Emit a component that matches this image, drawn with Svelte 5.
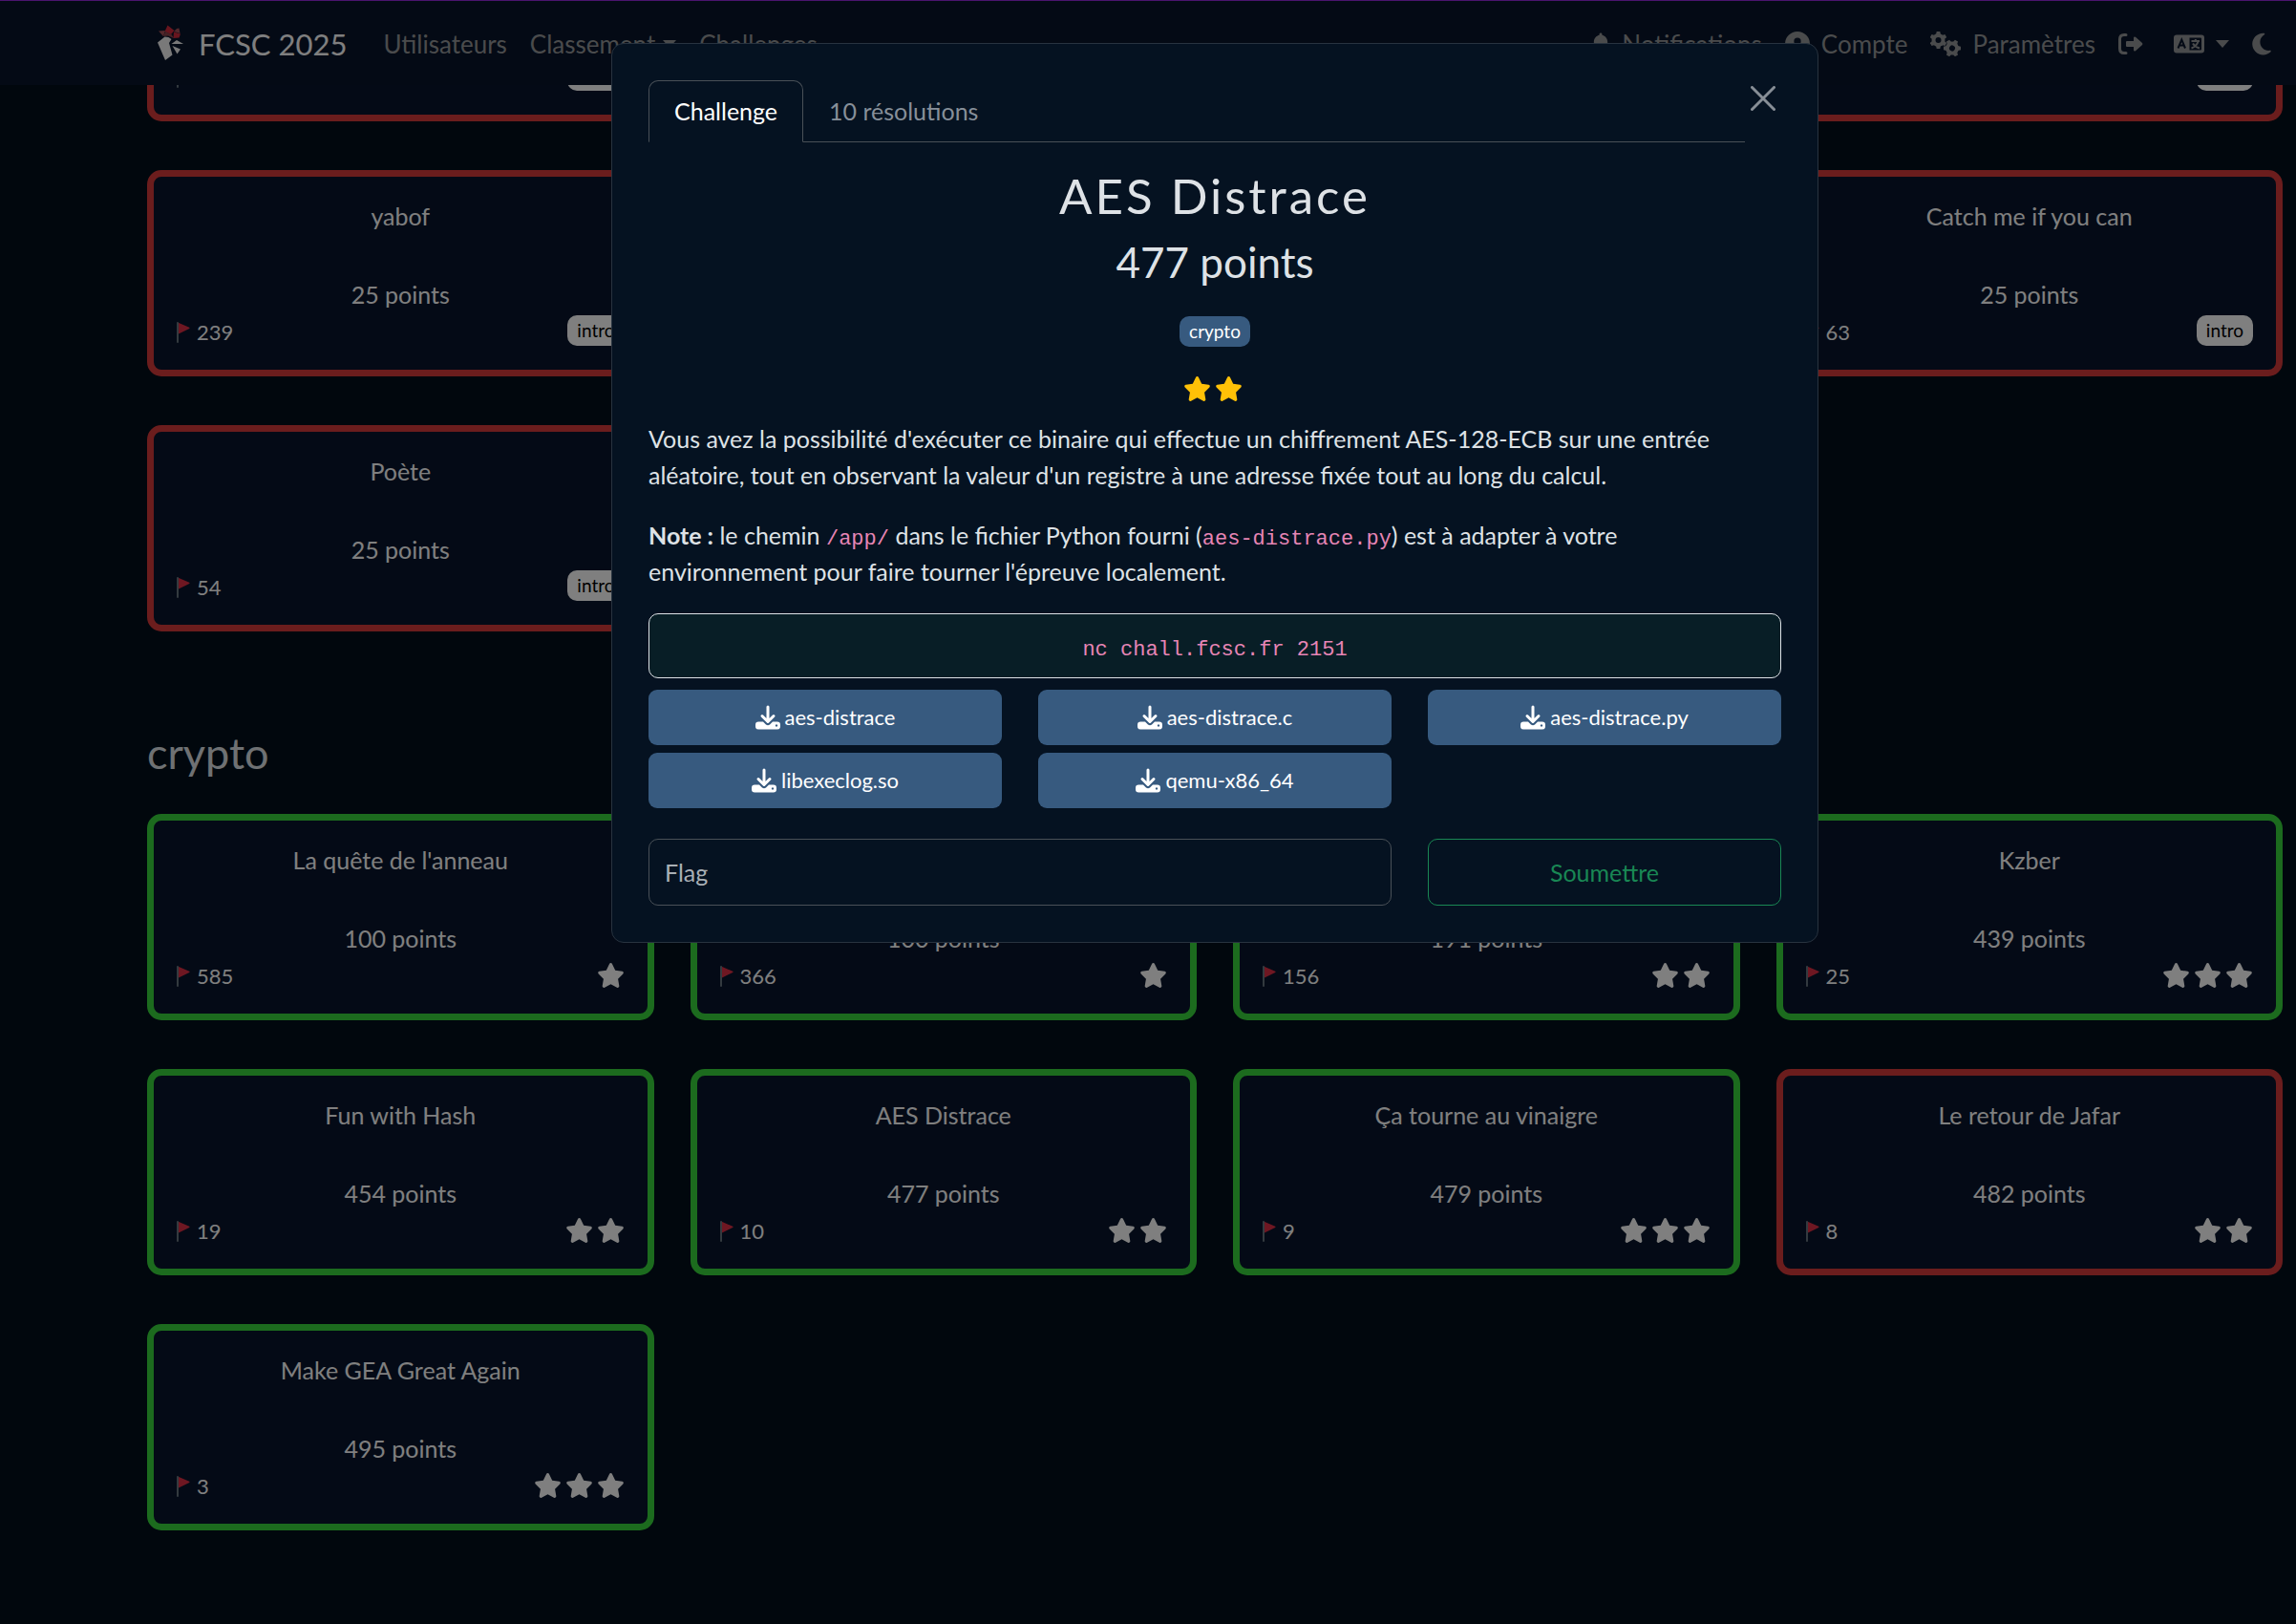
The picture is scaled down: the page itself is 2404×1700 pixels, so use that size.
<script>
  const introCards = [
    { title: '', points: 25, solves: 312, status: 'unsolved', tag: 'intro' },
    { title: '', points: 25, solves: 370, status: 'unsolved', tag: 'intro', last: true },
    { title: 'yabof', points: 25, solves: 239, status: 'unsolved', tag: 'intro' },
    { title: 'Catch me if you can', points: 25, solves: 63, status: 'unsolved', tag: 'intro', last: true },
    { title: 'Poète', points: 25, solves: 54, status: 'unsolved', tag: 'intro' }
  ];

  const cryptoCards = [
    { title: "La quête de l'anneau", points: 100, solves: 585, status: 'solved', stars: 1 },
    { title: '', points: 100, solves: 366, status: 'solved', stars: 1 },
    { title: '', points: 191, solves: 156, status: 'solved', stars: 2 },
    { title: 'Kzber', points: 439, solves: 25, status: 'solved', stars: 3 },
    { title: 'Fun with Hash', points: 454, solves: 19, status: 'solved', stars: 2 },
    { title: 'AES Distrace', points: 477, solves: 10, status: 'solved', stars: 2 },
    { title: 'Ça tourne au vinaigre', points: 479, solves: 9, status: 'solved', stars: 3 },
    { title: 'Le retour de Jafar', points: 482, solves: 8, status: 'unsolved', stars: 2 },
    { title: 'Make GEA Great Again', points: 495, solves: 3, status: 'solved', stars: 3 }
  ];

  const files = ['aes-distrace', 'aes-distrace.c', 'aes-distrace.py', 'libexeclog.so', 'qemu-x86_64'];
  let flag = $state('');
</script>

{#snippet star()}
  <svg class="star" viewBox="0 0 576 512" aria-hidden="true"><path d="M316.9 18C311.6 7 300.4 0 288.1 0s-23.4 7-28.8 18L195 150.3 51.4 171.5c-12 1.8-22 10.2-25.7 21.7s-.7 24.2 7.9 32.7L137.8 329 113.2 474.7c-2 12 3 24.2 12.9 31.3s23 8 33.8 2.3l128.3-68.5 128.3 68.5c10.8 5.7 23.9 4.9 33.8-2.3s14.9-19.3 12.9-31.3L438.5 329 542.7 225.9c8.6-8.5 11.7-21.2 7.9-32.7s-13.7-19.9-25.7-21.7L381.2 150.3 316.9 18z"/></svg>
{/snippet}

{#snippet card(c)}
  <button class="card {c.status}" class:last={c.last}>
    <span class="title">{c.title}</span>
    <span class="points">{c.points} points</span>
    <span class="foot">
      <span class="solves">
        <svg class="flag" viewBox="0 0 14 22" aria-hidden="true">
          <path class="cloth" d="M1 0.5 L13.2 5.8 Q14 6.5 13.2 7 L1 13z"/>
          <rect class="pole" width="2" height="22" rx="1"/>
        </svg>
        {c.solves}
      </span>
      {#if c.tag}
        <span class="tag">{c.tag}</span>
      {:else}
        <span class="stars">{#each Array(c.stars) as _}{@render star()}{/each}</span>
      {/if}
    </span>
  </button>
{/snippet}

{#snippet gear(x, y, turn)}
  <g transform="translate({x} {y}) rotate({turn})">
    <circle r="5" fill="none" stroke="currentColor" stroke-width="4"/>
    {#each [0, 60, 120, 180, 240, 300] as a}
      <path d="M-2.4 -6 L-1.8 -9 H1.8 L2.4 -6z" transform="rotate({a})"/>
    {/each}
  </g>
{/snippet}

<div class="page">
  <nav class="navbar">
    <a class="brand" href="#home">
      <svg class="logo" viewBox="0 0 28 38" aria-hidden="true">
        <path fill="#f2f2f2" d="M0 18.5 L7.5 12.5 L11.5 13 L14.5 15 L12 19 L15.5 31.5 L8 37z"/>
        <path fill="#f2f2f2" d="M14.5 20 L20 16 L27 20z M15.5 22 L24 25.5 L20.5 30.5z"/>
        <path fill="#d02a3c" d="M7.5 7 L10.5 0.5 L17.5 6 L14 10z"/>
        <path fill="#a65058" d="M1 6.5 L8 6 L6 12z M17 7 L20 4 L22.5 3.5 L23.5 9z"/>
        <path fill="#8c444c" d="M8 7 L14.5 10 L17 14 L11 11.5 L6 12z"/>
        <path fill="#d02a3c" d="M17 7.5 L24 9.5 L22.5 13.5 L16.5 14z"/>
      </svg>
      FCSC 2025
    </a>
    <a class="link" href="#users">Utilisateurs</a>
    <a class="link caret" href="#scores">Classement</a>
    <a class="link" href="#challenges">Challenges</a>
    <div class="right">
      <a class="link" href="#notifications">
        <svg width="20" height="26" viewBox="0 0 448 512" aria-hidden="true"><path d="M224 0c-17.7 0-32 14.3-32 32l0 19.2C119 66 64 130.6 64 208l0 18.8c0 47-17.3 92.4-48.5 127.6l-7.4 8.3c-8.4 9.4-10.4 22.9-5.3 34.4S19.4 416 32 416l384 0c12.6 0 24-7.4 29.2-18.9s3.1-25-5.3-34.4l-7.4-8.3C401.3 319.2 384 273.9 384 226.8l0-18.8c0-77.4-55-142-128-156.8L256 32c0-17.7-14.3-32-32-32z"/></svg>
        Notifications
      </a>
      <a class="link" href="#account">
        <svg width="26" height="26" viewBox="0 0 512 512" aria-hidden="true"><path d="M399 384.2C376.9 345.8 335.4 320 288 320H224c-47.4 0-88.9 25.8-111 64.2c35.2 39.2 86.2 63.8 143 63.8s107.8-24.7 143-63.8zM0 256a256 256 0 1 1 512 0A256 256 0 1 1 0 256zm256 16a72 72 0 1 0 0-144 72 72 0 1 0 0 144z"/></svg>
        Compte
      </a>
      <a class="link" href="#settings">
        <svg width="32" height="26" viewBox="0 0 32 26" aria-hidden="true">{@render gear(8.5, 9, 0)}{@render gear(23, 17.5, 30)}</svg>
        Paramètres
      </a>
      <a class="link" href="#logout" aria-label="Se déconnecter">
        <svg width="26" height="26" viewBox="0 0 26 26" aria-hidden="true">
          <path fill="none" stroke="currentColor" stroke-width="3" stroke-linecap="round" d="M8 3.5 H6 Q1.5 3.5 1.5 8 V18 Q1.5 22.5 6 22.5 H8"/>
          <path d="M8 11 Q8 10 9 10 H16 V6.5 Q16.3 4.8 18 5.8 L25 12 Q25.8 13 25 14 L18 20.2 Q16.3 21.2 16 19.5 V16 H9 Q8 16 8 15z"/>
        </svg>
      </a>
      <button class="link caret language" aria-label="Langue">
        <svg width="32" height="26" viewBox="0 0 32 26" aria-hidden="true">
          <path fill-rule="evenodd" d="M3 3.5 H29 Q32 3.5 32 6.5 V19.5 Q32 22.5 29 22.5 H3 Q0 22.5 0 19.5 V6.5 Q0 3.5 3 3.5z M16.5 6.5 V19.5 H28 Q29 19.5 29 18.5 V7.5 Q29 6.5 28 6.5z"/>
          <path class="cut" d="M4.5 17.5 L8.3 8.5 L12 17.5 M6 14.5 H10.5"/>
          <path class="ink" d="M18.5 10 H27 M22.8 8 V10 M25.5 10.5 Q24 15.5 18.5 17.5 M20 12.5 Q22 16 27 17.5"/>
        </svg>
      </button>
      <button class="link" aria-label="Thème sombre">
        <svg width="20" height="26" viewBox="0 0 384 512" aria-hidden="true"><path d="M223.5 32C100 32 0 132.3 0 256S100 480 223.5 480c60.6 0 115.5-24.2 155.8-63.4c5-4.9 6.3-12.5 3.1-18.7s-10.1-9.7-17-8.5c-9.8 1.7-19.8 2.6-30.1 2.6c-96.9 0-175.5-78.8-175.5-176c0-65.8 36-123.1 89.3-153.3c6.1-3.5 9.2-10.5 7.7-17.3s-7.3-11.9-14.3-12.5c-6.3-.5-12.6-.8-19-.8z"/></svg>
      </button>
    </div>
  </nav>

  <main>
    <section class="grid scrolled">
      {#each introCards as c}{@render card(c)}{/each}
    </section>
    <h3>crypto</h3>
    <section class="grid">
      {#each cryptoCards as c}{@render card(c)}{/each}
    </section>
  </main>
</div>

<div class="backdrop">
  <div class="modal" role="dialog" aria-label="AES Distrace">
    <div class="top">
      <div class="tabs" role="tablist">
        <button class="tab active" role="tab" aria-selected="true">Challenge</button>
        <button class="tab" role="tab" aria-selected="false">10 résolutions</button>
      </div>
      <button class="close" aria-label="Fermer">
        <svg width="26" height="26" viewBox="0 0 26 26" aria-hidden="true"><path d="M1.5 1.5 L24.5 24.5 M24.5 1.5 L1.5 24.5"/></svg>
      </button>
    </div>
    <h2>AES Distrace</h2>
    <p class="value">477 points</p>
    <div class="center"><span class="tag blue">crypto</span></div>
    <div class="center gold">{@render star()}{@render star()}</div>
    <p>Vous avez la possibilité d'exécuter ce binaire qui effectue un chiffrement AES-128-ECB sur une entrée aléatoire, tout en observant la valeur d'un registre à une adresse fixée tout au long du calcul.</p>
    <p><strong>Note :</strong> le chemin <code>/app/</code> dans le fichier Python fourni (<code>aes-distrace.py</code>) est à adapter à votre environnement pour faire tourner l'épreuve localement.</p>
    <div class="command"><code>nc chall.fcsc.fr 2151</code></div>
    <div class="files">
      {#each files as f}
        <a class="file" href="#{f}">
          <svg width="26" height="26" viewBox="0 0 26 26" aria-hidden="true">
            <path class="arrow" d="M13 2 V17 M7 11.5 L13 17.5 L19 11.5"/>
            <path fill-rule="evenodd" d="M3.2 17.5 H8 L11 20.5 Q13 22 15 20.5 L18 17.5 H22.8 Q26 17.5 26 20.7 V22.3 Q26 25.5 22.8 25.5 H3.2 Q0 25.5 0 22.3 V20.7 Q0 17.5 3.2 17.5z M22 20.3 a1.2 1.2 0 1 0 0.01 0z"/>
          </svg>
          {f}
        </a>
      {/each}
    </div>
    <form class="submit" onsubmit={(e) => e.preventDefault()}>
      <input type="text" placeholder="Flag" aria-label="Flag" bind:value={flag} />
      <button class="send">Soumettre</button>
    </form>
  </div>
</div>

<style>
  :global(body) {
    margin: 0;
    background: #020e1a;
    font-family: Lato, "Liberation Sans", sans-serif;
    font-size: 25px;
    line-height: 38px;
    color: #dee2e6;
  }
  button, input { font: inherit; color: inherit; margin: 0; }
  a { text-decoration: none; color: inherit; }
  svg { display: block; fill: currentColor; flex: none; }
  .page { min-height: 100vh; overflow: hidden; }

  .navbar {
    box-sizing: border-box;
    height: 89px;
    display: flex;
    align-items: center;
    padding: 1px 26px 0 165px;
    background: #09152b;
    border-top: 1px solid #9628dc;
  }
  .brand { display: flex; align-items: center; gap: 15px; font-size: 31px; color: #fff; margin-right: 26px; }
  .logo { width: 28px; height: 42px; margin-top: -2px; }
  .link {
    display: flex;
    align-items: center;
    gap: 12px;
    padding: 0 12px;
    border: 0;
    background: none;
    color: #949799;
    font-size: 26px;
  }
  .caret::after {
    content: "";
    margin-left: -4px;
    border: 7px solid transparent;
    border-top: 8px solid currentColor;
    border-bottom: 0;
  }
  .right { display: flex; margin-left: auto; }
  .right .language { padding-left: 20px; }
  .language::after { margin-left: 0; }
  .right .link:last-child { padding-right: 0; }
  .cut { fill: none; stroke: #09152b; stroke-width: 2; }
  .ink { fill: none; stroke: currentColor; stroke-width: 2; }

  main { padding: 0 14px 98px 154px; overflow: hidden; }
  .grid { display: grid; grid-template-columns: repeat(4, 1fr); gap: 51px 38px; }
  .scrolled { margin-top: -178px; }
  h3 { margin: 100px 0 37px; font-size: 45px; line-height: 54px; font-weight: 400; }

  .card {
    display: flex;
    flex-direction: column;
    padding: 22px 24px;
    border: 7px solid #d63a3a;
    border-radius: 15px;
    background: #08152c;
    color: #fff;
    text-align: center;
  }
  .card.solved { border-color: #38d63c; }
  .last { grid-column: 4; }
  .title { min-height: 38px; margin-bottom: 44px; }
  .foot { display: flex; justify-content: space-between; align-items: flex-start; margin-top: 3px; height: 35px; }
  .solves { display: flex; align-items: center; gap: 7px; font-size: 22px; line-height: 35px; }
  .flag { width: 14px; height: 22px; }
  .cloth { fill: #dd2e44; }
  .pole { fill: #66757f; }
  .stars, .gold { display: flex; align-items: center; gap: 4px; }
  .stars { height: 34px; }
  .star { width: 29px; height: 26px; }
  .tag {
    padding: 0 10px;
    border-radius: 10px;
    background: #fff;
    color: #000;
    font-size: 19px;
    line-height: 32px;
  }
  .tag.blue { background: #375a7f; color: #fff; }

  .backdrop {
    position: absolute;
    inset: 0;
    display: flex;
    justify-content: center;
    align-items: flex-start;
    padding: 45px 0 0 140px;
    background: rgba(0, 0, 0, 0.5);
  }
  .modal {
    box-sizing: border-box;
    width: 1264px;
    max-width: 100%;
    padding: 38px;
    border: 1px solid #28333f;
    border-radius: 13px;
    background: #051221;
  }
  .top { display: flex; align-items: flex-start; justify-content: space-between; }
  .tabs { display: flex; flex: 1; border-bottom: 1px solid #495057; }
  .tab { padding: 12px 26px 13px; border: 1px solid transparent; background: none; color: #878f99; margin-bottom: -1px; line-height: 38px; }
  .tab.active { border-color: #495057; border-bottom-color: #051221; border-radius: 10px 10px 0 0; background: #051221; color: #fff; }
  .close { border: 0; background: none; padding: 6px; color: #878e96; }
  .close path { stroke: currentColor; stroke-width: 3; stroke-linecap: round; }
  h2 { margin: 25px 0 0; font-size: 51px; line-height: 62px; font-weight: 400; letter-spacing: 3px; text-align: center; }
  .value { margin: 11px 0 30px; font-size: 44px; line-height: 54px; text-align: center; }
  .center { display: flex; justify-content: center; }
  .gold { margin: 31px 0 20px; padding-right: 5px; color: #ffc107; }
  p { margin: 0 0 25px; }
  code { font-family: "Liberation Mono", monospace; font-size: 22px; line-height: 1; color: #e685b5; }
  .command { padding: 14px; border: 1px solid #dee2e6; border-radius: 10px; background: #081e26; text-align: center; }
  .files { display: grid; grid-template-columns: repeat(3, 1fr); gap: 8px 38px; margin: 12px 0 32px; }
  .file {
    display: flex;
    align-items: center;
    justify-content: center;
    gap: 5px;
    height: 58px;
    border-radius: 9px;
    background: #375a7f;
    color: #fff;
    font-size: 22px;
  }
  .arrow { fill: none; stroke: currentColor; stroke-width: 3; stroke-linecap: round; stroke-linejoin: round; }
  .submit { display: grid; grid-template-columns: repeat(3, 1fr); gap: 38px; }
  input {
    grid-column: span 2;
    padding: 15px 16px;
    border: 1px solid #495057;
    border-radius: 10px;
    background: none;
  }
  input::placeholder { color: #a9afb5; opacity: 1; }
  .send { border: 1px solid #198754; border-radius: 10px; background: none; color: #198754; }
</style>
